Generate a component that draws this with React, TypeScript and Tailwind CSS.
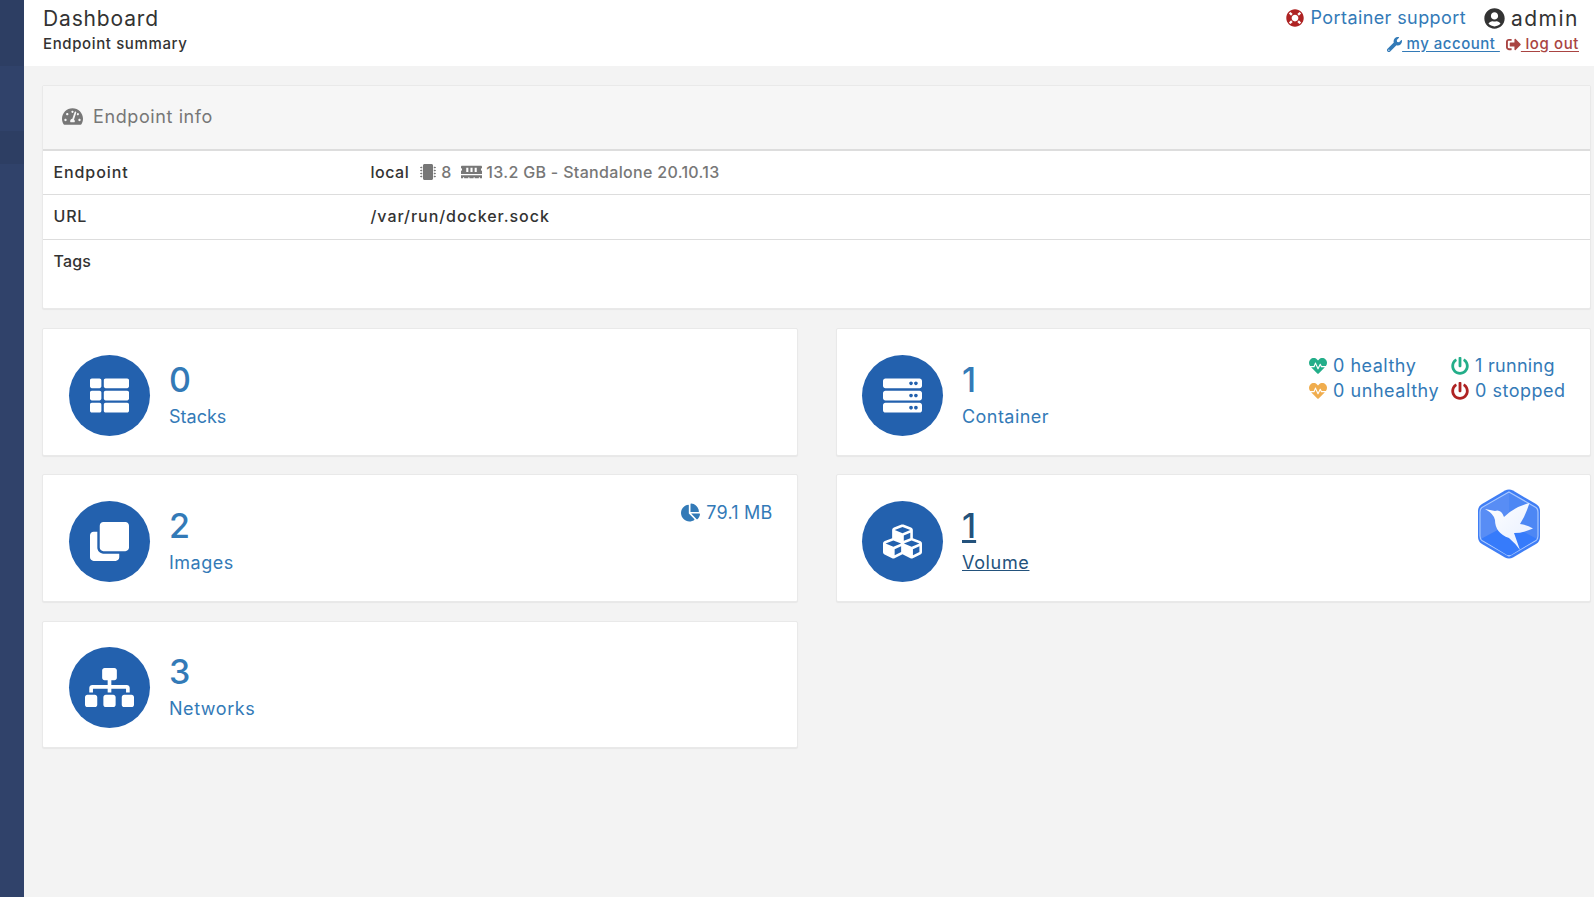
import type { ReactNode } from "react";
import {
  FaChartPie,
  FaClone,
  FaCubes,
  FaHeartbeat,
  FaLifeRing,
  FaMemory,
  FaMicrochip,
  FaPowerOff,
  FaServer,
  FaSignOutAlt,
  FaSitemap,
  FaTachometerAlt,
  FaThList,
  FaUserCircle,
  FaWrench,
} from "react-icons/fa";

type TileProps = {
  icon: ReactNode;
  count: string;
  label: string;
  tracking: string;
  active?: boolean;
  className: string;
  children?: ReactNode;
};

function Tile({ icon, count, label, tracking, active, className, children }: TileProps) {
  return (
    <a
      href="#"
      className={`flex items-start rounded-[2px] border border-[#e9e9e9] bg-white pl-[26px] pr-6 shadow-[0_1px_1px_rgba(0,0,0,0.05)] even:pl-[25.5px] ${
        active ? "text-[#23527c] underline" : "text-[#337ab7]"
      } ${className}`}
    >
      <span className="flex size-[81px] shrink-0 items-center justify-center rounded-full bg-[#2361ae] text-white">
        {icon}
      </span>
      <span className="ml-[19px] flex flex-col">
        <span className="mt-[3px] text-[34px] font-medium leading-[44px] decoration-[3px] underline-offset-[4px]">
          {count}
        </span>
        <span className={`mt-[3px] text-[18px] leading-[24px] ${tracking}`}>{label}</span>
      </span>
      {children}
    </a>
  );
}

function BirdLogo() {
  return (
    <svg viewBox="0 0 64 70" className="-mt-[12px] ml-auto mr-[25px] h-[70px] w-[64px] shrink-0">
      <defs>
        <linearGradient id="wing" x1="0" y1="0" x2="1" y2="1">
          <stop offset="0" stopColor="#ffffff" />
          <stop offset="1" stopColor="#e6eeff" />
        </linearGradient>
      </defs>
      <path
        d="M28 1.600Q32 -.4 36 1.600L59 15Q63 17.500 63 22V48Q63 52.500 59 55L36 68.400Q32 70.400 28 68.400L5 55Q1 52.500 1 48V22Q1 17.500 5 15Z"
        fill="#3f7ef5"
      />
      <path
        d="M32 3L59 18.500Q61 20 61 23V47Q61 50 59 51.500L32 67L5 51.500Q3 50 3 47V23Q3 20 5 18.500Z"
        fill="#4d87f4"
        stroke="#a9c8ff"
        strokeWidth="1.200"
      />
      <path d="M32 4V35L4 50V22L7 18Z" fill="#6394f5" opacity=".5" />
      <path d="M32 35L60 50L34 66H30L4 50Z" fill="#367bfb" />
      <path
        d="M8 20L18 22Q24 20 27 28Q37 18 52.500 14L50 21L47 28L43 35Q50 36 56 39.500Q46 44 37 44L43 61Q38 54 32 49Q18 44 18 31Q17 25 8 20Z"
        fill="url(#wing)"
      />
    </svg>
  );
}

export default function App() {
  return (
    <div className="flex h-[897px] w-full overflow-hidden bg-[#f3f3f3] font-['Inter',sans-serif] text-[#333]">
      <aside className="flex w-6 shrink-0 flex-col bg-[#30426a]">
        <div className="h-[66px] bg-[#2d3e63]" />
        <div className="mt-[65px] h-[33px] bg-[#2d3e63]" />
      </aside>

      <div className="flex min-w-0 flex-1 flex-col">
        <header className="flex h-[66px] shrink-0 justify-between bg-white pl-[19px] pr-[15px]">
          <div>
            <h1 className="mt-[5px] text-[21px] leading-[28px] tracking-[0.85px]">Dashboard</h1>
            <p className="mt-px text-[15px] font-medium leading-5 tracking-[0.62px]">Endpoint summary</p>
          </div>
          <div className="flex flex-col items-end">
            <div className="mt-[4px] flex h-[29px] items-center">
              <a href="#" className="mb-[2px] flex items-center text-[18px] text-[#337ab7]">
                <FaLifeRing className="mr-[7px] size-[18px] text-[#ae2323]" />
                <span className="tracking-[0.4px]">Portainer support</span>
              </a>
              <FaUserCircle className="ml-[18px] mr-[6px] size-[21px]" />
              <span className="text-[21px] tracking-[1.5px]">admin</span>
            </div>
            <div className="flex h-[22px] items-center text-[15px] font-medium">
              <a href="#" className="flex items-center text-[#337ab7]">
                <FaWrench className="size-[15px]" />
                <span className="whitespace-pre tracking-[0.5px] underline underline-offset-2"> my account </span>
              </a>
              <a href="#" className="ml-[6px] flex items-center text-[#a94442]">
                <FaSignOutAlt className="size-[15px]" />
                <span className="whitespace-pre tracking-[0.6px] underline underline-offset-2"> log out</span>
              </a>
            </div>
          </div>
        </header>

        <main className="pl-[18px] pr-[3px] pt-[19px]">
          <section className="h-[224px] rounded-[2px] border border-[#e9e9e9] bg-white shadow-[0_1px_1px_rgba(0,0,0,0.05)]">
            <div className="flex h-[65px] items-center border-b-2 border-[#dddddd] bg-[#f6f6f6] pb-[2px] pl-[19px] text-[#777]">
              <FaTachometerAlt className="size-[21px]" />
              <h2 className="ml-[10px] text-[18px] tracking-[0.6px]">Endpoint info</h2>
            </div>
            <div className="text-[16px] font-medium">
              <div className="flex h-[44px] items-center border-b border-[#dddddd] pb-px pl-[10.5px]">
                <span className="w-[317px] tracking-[0.9px]">Endpoint</span>
                <span className="tracking-[0.5px]">local</span>
                <span className="ml-[11px] flex items-center text-[#777]">
                  <FaMicrochip className="size-4" />
                  <span className="ml-[5px]">8</span>
                  <FaMemory className="ml-[10px] h-[18px] w-[21px]" />
                  <span className="ml-[4px] tracking-[0.32px]">13.2 GB - Standalone 20.10.13</span>
                </span>
              </div>
              <div className="flex h-[45px] items-center border-b border-[#dddddd] pb-[2px] pl-[10.5px]">
                <span className="w-[317px] tracking-[0.8px]">URL</span>
                <span className="tracking-[0.95px]">/var/run/docker.sock</span>
              </div>
              <div className="flex h-[44px] items-center pb-[2px] pl-[10.5px]">
                <span className="tracking-[0.2px]">Tags</span>
              </div>
            </div>
          </section>

          <div className="mt-[19px] grid grid-cols-2 gap-x-[38px]">
            <Tile
              icon={<FaThList className="size-[39px]" />}
              count="0"
              label="Stacks"
              tracking="tracking-normal"
              className="h-[128px] pt-[25.5px]"
            />
            <Tile
              icon={<FaServer className="size-[39px]" />}
              count="1"
              label="Container"
              tracking="tracking-[0.45px]"
              className="h-[128px] pt-[25.5px]"
            >
              <span className="-mt-[1.5px] ml-auto grid grid-cols-[142px_115px] text-[18px] leading-[25px]">
                <span className="flex items-center">
                  <FaHeartbeat className="mr-[6px] size-[18px] text-[#23ae89]" />
                  <span className="tracking-[0.5px]">0 healthy</span>
                </span>
                <span className="flex items-center">
                  <FaPowerOff className="mr-[6px] size-[18px] text-[#23ae89]" />
                  <span className="tracking-[0.3px]">1 running</span>
                </span>
                <span className="flex items-center">
                  <FaHeartbeat className="mr-[6px] size-[18px] text-[#f0ad4e]" />
                  <span className="tracking-[0.55px]">0 unhealthy</span>
                </span>
                <span className="flex items-center">
                  <FaPowerOff className="mr-[6px] size-[18px] text-[#ae2323]" />
                  <span className="tracking-[0.5px]">0 stopped</span>
                </span>
              </span>
            </Tile>
            <Tile
              icon={<FaClone className="size-[39px]" />}
              count="2"
              label="Images"
              tracking="tracking-[0.5px]"
              className="mt-[18px] h-[128px] pt-[26px]"
            >
              <span className="-mt-px ml-auto flex h-[25px] items-center text-[18px]">
                <FaChartPie className="mr-[6px] size-[19px]" />
                <span className="tracking-[0.2px]">79.1 MB</span>
              </span>
            </Tile>
            <Tile
              icon={<FaCubes className="size-[39px]" />}
              count="1"
              label="Volume"
              tracking="tracking-[0.65px]"
              active
              className="mt-[18px] h-[128px] pt-[26px]"
            >
              <BirdLogo />
            </Tile>
            <Tile
              icon={<FaSitemap className="size-[49px]" />}
              count="3"
              label="Networks"
              tracking="tracking-[0.55px]"
              className="mt-[19px] h-[127px] pt-[25px]"
            />
          </div>
        </main>
      </div>
    </div>
  );
}
